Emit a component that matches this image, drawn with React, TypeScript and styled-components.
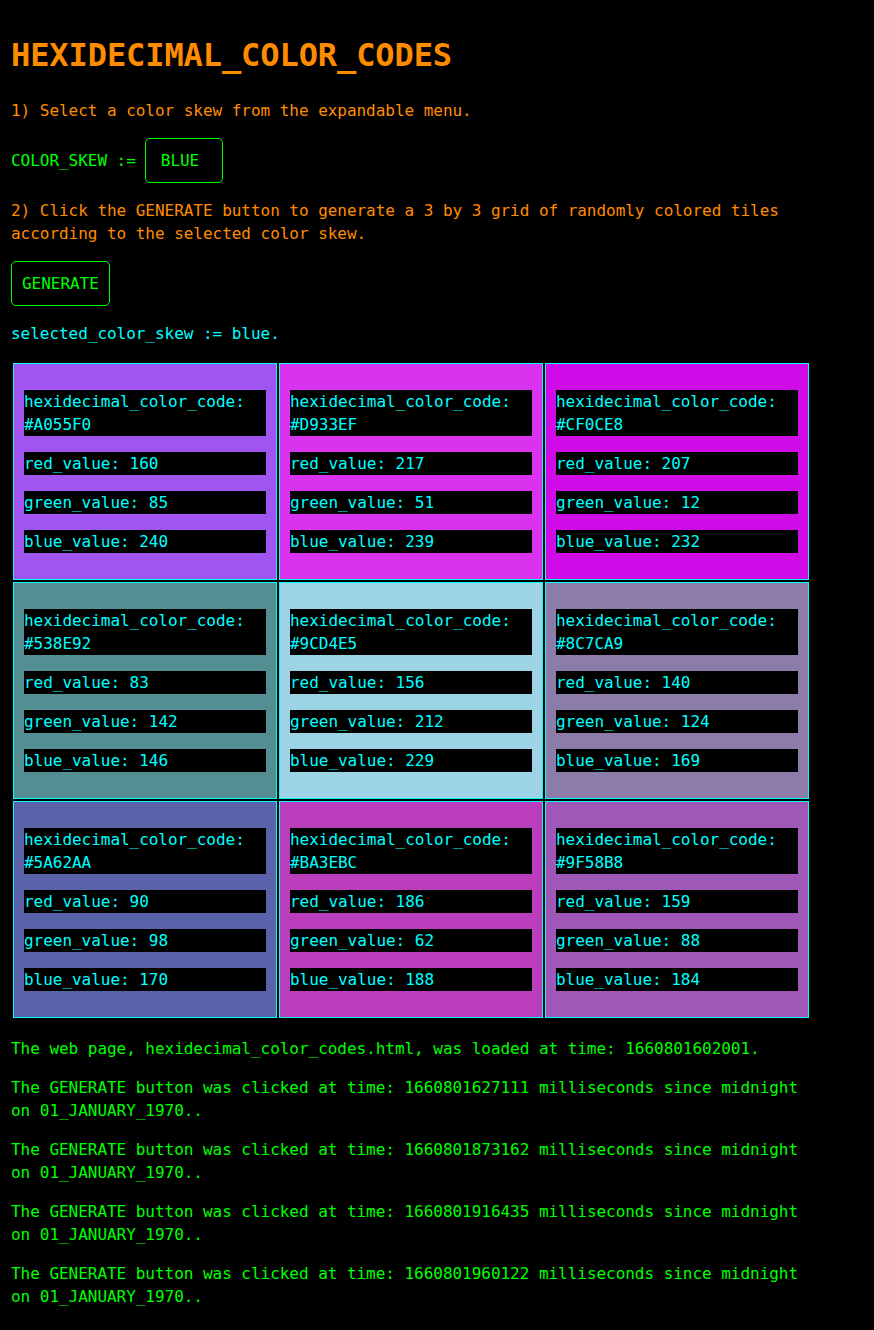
import React from "react";
import styled, { createGlobalStyle } from "styled-components";

const GlobalStyle = createGlobalStyle`
  html, body {
    margin: 0;
    padding: 0;
    background: #000000;
  }
  body {
    font-family: "DejaVu Sans Mono", "Liberation Mono", monospace;
    font-size: 16px;
  }
`;

const Page = styled.div`
  padding: 12px 0 24px 11px;
  width: 800px;
  font-family: "DejaVu Sans Mono", "Liberation Mono", monospace;
  font-size: 16px;
  line-height: 23px;
  letter-spacing: -0.035px;
`;

const Title = styled.h1`
  margin: 0 0 21px 0;
  padding-top: 20px;
  font-size: 32px;
  line-height: 46px;
  font-weight: bold;
  letter-spacing: -0.09px;
  color: #ff8c00;
`;

const Para = styled.p<{ $tone: "orange" | "green" | "cyan" }>`
  margin: 16px 0;
  color: ${(p) =>
    p.$tone === "orange" ? "#ff8c00" : p.$tone === "green" ? "#00ff00" : "#00ffff"};
`;

const SkewRow = styled.div`
  margin: 16px 0;
  display: flex;
  align-items: center;
  gap: 9px;
  color: #00ff00;
`;

const SkewSelect = styled.div`
  box-sizing: border-box;
  width: 78px;
  height: 45px;
  padding: 10px 15px;
  border: 1px solid #00ff00;
  border-radius: 5px;
  color: #00ff00;
  background: #000000;
`;

const GenerateButton = styled.button`
  display: block;
  box-sizing: border-box;
  height: 45px;
  margin: 16px 0;
  padding: 10px;
  border: 1px solid #00ff00;
  border-radius: 5px;
  background: #000000;
  color: #00ff00;
  font-family: inherit;
  font-size: 16px;
  line-height: 23px;
  letter-spacing: inherit;
`;

const Grid = styled.div`
  display: grid;
  grid-template-columns: repeat(3, 264px);
  grid-auto-rows: 217px;
  gap: 2px;
  padding: 2px;
  margin: 16px 0 17px 0;
`;

const Tile = styled.div`
  box-sizing: border-box;
  border: 1px solid #00ffff;
  padding: 26px 10px;
  display: flex;
  flex-direction: column;
  gap: 16px;
`;

const Field = styled.div`
  background: #000000;
  color: #00ffff;
  line-height: 23px;
`;

type Tone = { r: number; g: number; b: number };

const tiles: Tone[] = [
  { r: 160, g: 85, b: 240 },
  { r: 217, g: 51, b: 239 },
  { r: 207, g: 12, b: 232 },
  { r: 83, g: 142, b: 146 },
  { r: 156, g: 212, b: 229 },
  { r: 140, g: 124, b: 169 },
  { r: 90, g: 98, b: 170 },
  { r: 186, g: 62, b: 188 },
  { r: 159, g: 88, b: 184 },
];

const hex = (t: Tone) =>
  "#" +
  [t.r, t.g, t.b]
    .map((v) => v.toString(16).toUpperCase().padStart(2, "0"))
    .join("");

const clicks = ["1660801627111", "1660801873162", "1660801916435", "1660801960122"];

export default function App() {
  return (
    <>
      <GlobalStyle />
      <Page>
        <Title>HEXIDECIMAL_COLOR_CODES</Title>
        <Para $tone="orange">1) Select a color skew from the expandable menu.</Para>
        <SkewRow>
          <span>COLOR_SKEW :=</span>
          <SkewSelect>BLUE</SkewSelect>
        </SkewRow>
        <Para $tone="orange">
          2) Click the GENERATE button to generate a 3 by 3 grid of randomly colored tiles
          according to the selected color skew.
        </Para>
        <GenerateButton>GENERATE</GenerateButton>
        <Para $tone="cyan">selected_color_skew := blue.</Para>
        <Grid>
          {tiles.map((t, i) => {
            const code = hex(t);
            return (
              <Tile key={i} style={{ background: code }}>
                <Field>hexidecimal_color_code: {code}</Field>
                <Field>red_value: {t.r}</Field>
                <Field>green_value: {t.g}</Field>
                <Field>blue_value: {t.b}</Field>
              </Tile>
            );
          })}
        </Grid>
        <Para $tone="green">
          The web page, hexidecimal_color_codes.html, was loaded at time: 1660801602001.
        </Para>
        {clicks.map((c) => (
          <Para $tone="green" key={c}>
            The GENERATE button was clicked at time: {c} milliseconds since midnight on
            01_JANUARY_1970..
          </Para>
        ))}
      </Page>
    </>
  );
}
